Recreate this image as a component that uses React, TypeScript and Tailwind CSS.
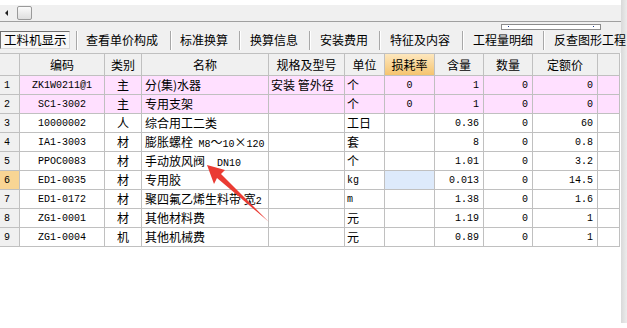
import React from "react";

const CJK = { fontFamily: '"Noto Sans CJK SC", "Noto Sans", sans-serif' };
const MONO = { fontFamily: '"Liberation Mono", "DejaVu Sans Mono", monospace' };

type Row = {
  n: string;
  code: string;
  cat: string;
  name: React.ReactNode;
  spec: string;
  unit: React.ReactNode;
  loss: string;
  qty: string;
  num: string;
  price: string;
  pink?: boolean;
  sel?: boolean;
};

const rows: Row[] = [
  { n: "1", code: "ZK1W0211@1", cat: "主", name: "分(集)水器", spec: "安装 管外径", unit: "个", loss: "0", qty: "1", num: "0", price: "0", pink: true },
  { n: "2", code: "SC1-3002", cat: "主", name: "专用支架", spec: "", unit: "个", loss: "0", qty: "1", num: "0", price: "0", pink: true },
  { n: "3", code: "10000002", cat: "人", name: "综合用工二类", spec: "", unit: "工日", loss: "", qty: "0.36", num: "0", price: "60" },
  {
    n: "4", code: "IA1-3003", cat: "材",
    name: (<span className="whitespace-pre">膨胀螺栓  <span style={MONO} className="text-[10px]">M8</span>～<span style={MONO} className="text-[10px]">10</span>×<span style={MONO} className="text-[10px]">120</span></span>),
    spec: "", unit: "套", loss: "", qty: "8", num: "0", price: "0.8",
  },
  {
    n: "5", code: "PPOC0083", cat: "材",
    name: (<span className="whitespace-pre">手动放风阀<span style={MONO} className="text-[10px] ml-[12px]">DN10</span></span>),
    spec: "", unit: "个", loss: "", qty: "1.01", num: "0", price: "3.2",
  },
  { n: "6", code: "ED1-0035", cat: "材", name: "专用胶", spec: "", unit: (<span style={MONO} className="text-[10px]">kg</span>), loss: "", qty: "0.013", num: "0", price: "14.5", sel: true },
  {
    n: "7", code: "ED1-0172", cat: "材",
    name: (<span className="whitespace-pre">聚四氟乙烯生料带 宽<span style={MONO} className="text-[10px]">2</span></span>),
    spec: "", unit: (<span style={MONO} className="text-[10px]">m</span>), loss: "", qty: "1.38", num: "0", price: "1.6",
  },
  { n: "8", code: "ZG1-0001", cat: "材", name: "其他材料费", spec: "", unit: "元", loss: "", qty: "1.19", num: "0", price: "1" },
  { n: "9", code: "ZG1-0004", cat: "机", name: "其他机械费", spec: "", unit: "元", loss: "", qty: "0.89", num: "0", price: "1" },
];

const cell = "h-[19px] border-r border-b border-[#c0c0c0] overflow-hidden whitespace-nowrap flex items-center";
const hcell = "h-[22px] border-r border-b border-[#c0c0c0] flex items-center justify-center text-[12px] bg-[#f0f0f0]";

const tabs: { label: string; cls: string }[] = [
  { label: "查看单价构成", cls: "w-[92px] pl-[8px]" },
  { label: "标准换算", cls: "w-[67px] pl-[8px]" },
  { label: "换算信息", cls: "w-[68px] pl-[9px]" },
  { label: "安装费用", cls: "w-[68px] pl-[9px]" },
  { label: "特征及内容", cls: "w-[81px] pl-[9px]" },
  { label: "工程量明细", cls: "w-[79px] pl-[9px]" },
  { label: "反查图形工程", cls: "w-[76px] pl-[9px] relative z-10" },
];

function Sep() {
  return <div className="w-[2px] h-[19px] shrink-0 border-l border-[#a8a8a8] border-r border-r-white" />;
}

export default function App() {
  return (
    <div className="relative w-[627px] h-[328px] bg-white flex overflow-hidden text-black" style={CJK}>
      <div className="w-[621px] flex flex-col shrink-0">
        {/* top white strip */}
        <div className="h-[5px] bg-white" />
        {/* horizontal scrollbar band */}
        <div className="h-[17px] bg-[#f0f0f0] border-b border-[#a0a0a0] flex items-center">
          <div className="ml-[5px] w-0 h-0 border-y-[3px] border-y-transparent border-r-[3px] border-r-[#202020]" />
          <div className="ml-[9px] w-[15px] h-[14px] rounded-[2px] border border-[#9a9a9a] bg-gradient-to-b from-[#fbfbfb] to-[#dedede]" />
        </div>
        {/* tab bar */}
        <div className="relative h-[31px] bg-[#f0f0f0] pt-[5px] flex items-center">
          <div className="absolute left-[501px] top-[2px] w-[100px] h-[6px] border border-[#8c8c8c] bg-white">
            <div className="absolute left-[6px] top-[1px] w-[1px] h-[1px] bg-[#1a3a8a]" />
            <div className="absolute left-[91px] top-[1px] w-[1px] h-[1px] bg-[#1a3a8a]" />
          </div>
          <div className="w-[70px] h-[18px] shrink-0 border border-t-[#707070] border-l-[#707070] border-b-[#d8d8d8] border-r-[#d8d8d8] bg-[#f7f7f7] flex items-center pl-[3px] text-[12.5px] leading-none">
            工料机显示
          </div>
          <div className="w-[6px] shrink-0" />
          {tabs.map((t) => (
            <React.Fragment key={t.label}>
              <Sep />
              <div className={`${t.cls} shrink-0 text-[12px] leading-none flex items-center whitespace-nowrap`}>
                {t.label}
              </div>
            </React.Fragment>
          ))}
        </div>
        {/* table */}
        <div className="grid grid-cols-[20px_85px_37px_127px_76px_40px_50px_49px_49px_65px_22px] border-t border-[#c0c0c0] w-[620px]">
          <div className={hcell} />
          <div className={hcell}>编码</div>
          <div className={hcell}>类别</div>
          <div className={hcell}>名称</div>
          <div className={hcell}>规格及型号</div>
          <div className={hcell}>单位</div>
          <div className="h-[22px] border-r border-b border-[#c0c0c0] flex items-center justify-center text-[12px] bg-gradient-to-b from-[#fde7bd] to-[#f5c46e]">损耗率</div>
          <div className={hcell}>含量</div>
          <div className={hcell}>数量</div>
          <div className={hcell}>定额价</div>
          <div className={hcell} />
          {rows.map((r) => {
            const bg = r.pink ? "bg-[#ffe0ff]" : "bg-white";
            return (
              <React.Fragment key={r.n}>
                <div className={`${cell} pl-[4px] text-[10px] ${r.sel ? "bg-[#f9d594]" : "bg-[#f0f0f0]"}`} style={MONO}>{r.n}</div>
                <div className={`${cell} ${bg} justify-center text-[10px]`} style={MONO}>{r.code}</div>
                <div className={`${cell} ${bg} justify-center text-[12px]`}>{r.cat}</div>
                <div className={`${cell} ${bg} pl-[3px] text-[12px]`}>{r.name}</div>
                <div className={`${cell} ${bg} pl-[2px] text-[12px]`}>{r.spec}</div>
                <div className={`${cell} ${bg} pl-[2px] text-[12px]`}>{r.unit}</div>
                <div className={`${cell} ${r.sel ? "bg-[#ddeafb]" : bg} justify-center text-[10px]`} style={MONO}>{r.loss}</div>
                <div className={`${cell} ${bg} justify-end pr-[4px] text-[10px]`} style={MONO}>{r.qty}</div>
                <div className={`${cell} ${bg} justify-end pr-[4px] text-[10px]`} style={MONO}>{r.num}</div>
                <div className={`${cell} ${bg} justify-end pr-[4px] text-[10px]`} style={MONO}>{r.price}</div>
                <div className={`${cell} ${bg}`} />
              </React.Fragment>
            );
          })}
        </div>
      </div>
      {/* right edge strip */}
      <div className="w-[6px] h-[323px] shrink-0 bg-gradient-to-r from-[#d9d9d9] to-[#ececec]" />
      {/* red annotation arrow */}
      <svg className="absolute left-0 top-0 pointer-events-none" width="627" height="328" viewBox="0 0 627 328">
        <polygon points="207,165 225,170 221,174 269,222 217,178 214,184" fill="#ea3b33" />
      </svg>
    </div>
  );
}
